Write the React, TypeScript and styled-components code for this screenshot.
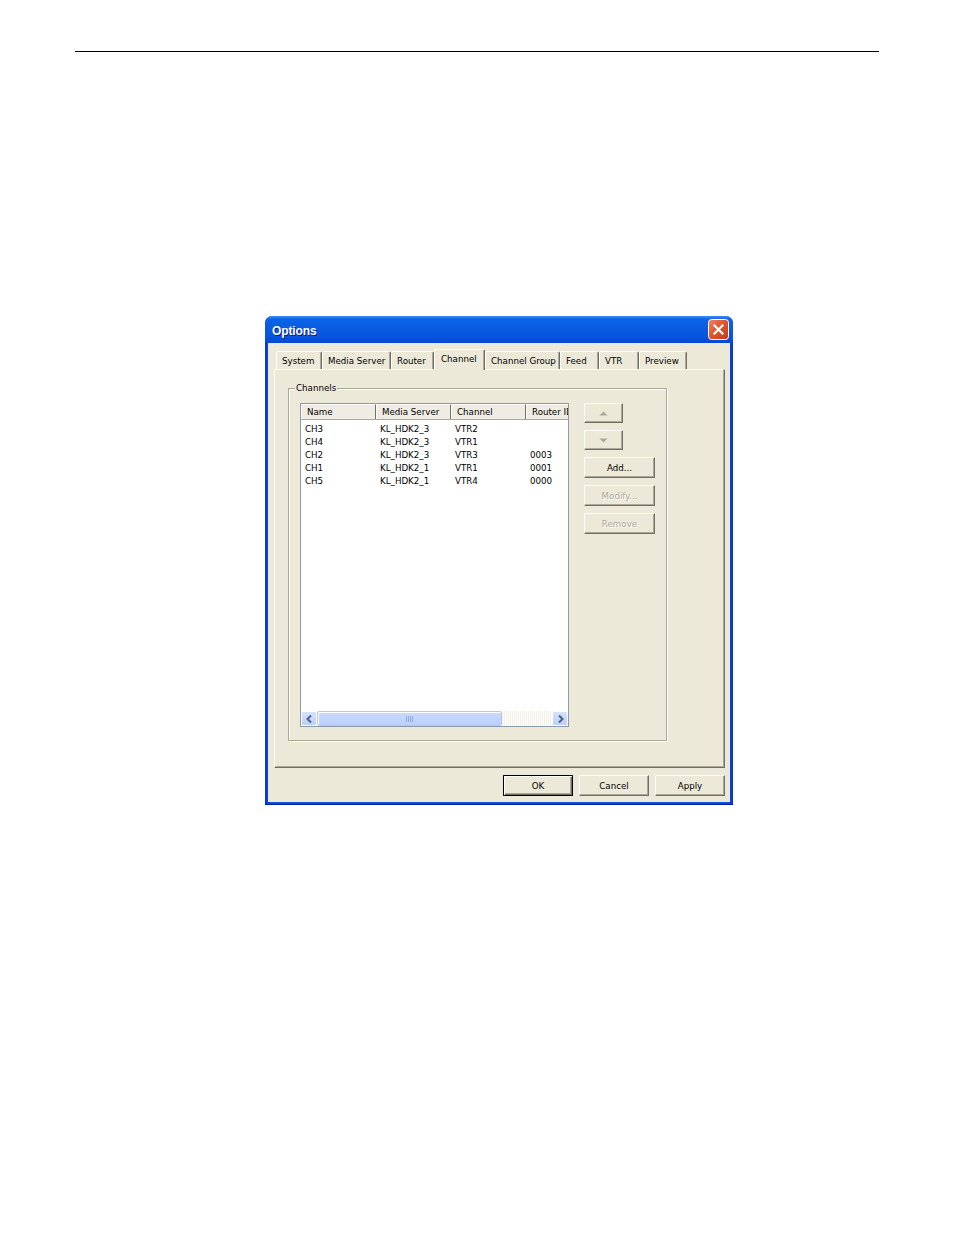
import React from "react";
import styled, { createGlobalStyle } from "styled-components";

const GlobalStyle = createGlobalStyle`
  html, body {
    margin: 0;
    padding: 0;
    background: #ffffff;
  }
  body {
    font-family: "DejaVu Sans", Tahoma, sans-serif;
  }
`;

const UI_FONT = `"DejaVu Sans", Tahoma, sans-serif`;

const Page = styled.div`
  width: 954px;
  height: 1235px;
  padding-top: 51px;
  box-sizing: border-box;
`;

const Rule = styled.div`
  margin-left: 75px;
  width: 804px;
  height: 1px;
  background: #000;
`;

const Window = styled.div`
  margin: 264px 0 0 265px;
  width: 468px;
  height: 489px;
  box-sizing: border-box;
  display: flex;
  flex-direction: column;
  padding: 0 3px 3px;
  border-radius: 7px 7px 0 0;
  background: linear-gradient(90deg, #0831d9 0%, #0a4fd8 1%, #0a4fd8 99%, #0831d9 100%);
  box-shadow: inset 0 -1px 0 #001ea0;
  overflow: hidden;
`;

const TitleBar = styled.div`
  height: 27px;
  box-sizing: border-box;
  margin: 0 -3px;
  display: flex;
  align-items: center;
  justify-content: space-between;
  padding: 2px 4px 0 7px;
  border-radius: 7px 7px 0 0;
  background: linear-gradient(
    180deg,
    #3f8cf3 0%,
    #0a64ea 12%,
    #0a5ce0 40%,
    #0655e0 75%,
    #0a48cf 100%
  );
`;

const Title = styled.span`
  font-family: "Liberation Sans", Arial, sans-serif;
  font-weight: bold;
  font-size: 12px;
  color: #fff;
  text-shadow: 1px 1px 0 #0a1c8a;
  letter-spacing: -0.1px;
`;

const Body = styled.div`
  flex: 1;
  display: flex;
  flex-direction: column;
  background: #ece9d8;
  padding: 6px 5px 6px 6px;
  box-sizing: border-box;
  font-family: ${UI_FONT};
  font-size: 8.7px;
  color: #000;
`;

const TabRow = styled.div`
  display: flex;
  align-items: flex-end;
  height: 20px;
  padding-left: 2px;
  position: relative;
  z-index: 1;
`;

const Tab = styled.div<{ $w: number; $active?: boolean }>`
  width: ${(p) => p.$w}px;
  height: ${(p) => (p.$active ? 21 : 18)}px;
  margin: ${(p) => (p.$active ? "0 0 -1px" : "0")};
  box-sizing: border-box;
  display: flex;
  align-items: center;
  padding: ${(p) => (p.$active ? "0 0 2px 6px" : "1px 0 0 5px")};
  background: #ece9d8;
  border-top: 1px solid #fff;
  border-left: 1px solid #fff;
  border-right: 1px solid #716f64;
  border-radius: 2px 2px 0 0;
  box-shadow: inset -1px 0 0 #aca899;
  white-space: nowrap;
`;

const Panel = styled.div`
  flex: 1;
  box-sizing: border-box;
  border-top: 1px solid #fff;
  border-left: 1px solid #fff;
  border-right: 1px solid #716f64;
  border-bottom: 1px solid #716f64;
  box-shadow: inset -1px -1px 0 #aca899;
  padding: 18px 0 0 13px;
`;

const GroupBox = styled.div`
  position: relative;
  width: 379px;
  height: 353px;
  box-sizing: border-box;
  border: 1px solid #aca899;
  box-shadow: inset 1px 1px 0 #fff, 1px 1px 0 #fff;
  padding: 14px 0 0 11px;
  display: flex;
  align-items: flex-start;
  gap: 15px;
`;

const GroupLabel = styled.span`
  position: absolute;
  top: -7px;
  left: 6px;
  padding: 0 1px;
  background: #ece9d8;
  line-height: 12px;
`;

const ListView = styled.div`
  width: 269px;
  height: 324px;
  box-sizing: border-box;
  border: 1px solid #8c9aab;
  background: #fff;
  display: flex;
  flex-direction: column;
  overflow: hidden;
`;

const HeaderRow = styled.div`
  display: grid;
  grid-template-columns: 75px 75px 75px 75px;
  height: 16px;
  background: #efede3;
  border-bottom: 1px solid #aca899;
  box-sizing: border-box;
`;

const HeaderCell = styled.div`
  box-sizing: border-box;
  padding-left: 5px;
  display: flex;
  align-items: center;
  white-space: nowrap;
  overflow: hidden;
  border-top: 1px solid #fff;
  border-left: 1px solid #fff;
  border-right: 1px solid #716f64;
`;

const Rows = styled.div`
  flex: 1;
  padding-top: 3px;
`;

const Row = styled.div`
  display: grid;
  grid-template-columns: 75px 75px 75px 75px;
  height: 13px;
  line-height: 13px;
`;

const Cell = styled.div`
  padding-left: 4px;
  white-space: nowrap;
`;

const HScroll = styled.div`
  height: 15px;
  display: flex;
  background: repeating-linear-gradient(90deg, #fefefb 0 1px, #f1efe6 1px 2px);
`;

const ScrollBtn = styled.div`
  width: 16px;
  height: 15px;
  box-sizing: border-box;
  border: 1px solid #fff;
  border-radius: 2px;
  background: linear-gradient(180deg, #d6e2fd 0%, #bccffa 100%);
  display: flex;
  align-items: center;
  justify-content: center;
`;

const Thumb = styled.div`
  width: 185px;
  height: 15px;
  box-sizing: border-box;
  border: 1px solid #b3c7f3;
  box-shadow: inset 1px 1px 0 #fff;
  border-radius: 2px;
  background: linear-gradient(180deg, #cbdafd 0%, #bcd0fb 100%);
  display: flex;
  align-items: center;
  justify-content: center;
`;

const Track = styled.div`
  flex: 1;
`;

const SideButtons = styled.div`
  display: flex;
  flex-direction: column;
  gap: 7px;
`;

const Btn = styled.button<{ $w: number; $h: number; $default?: boolean }>`
  width: ${(p) => p.$w}px;
  height: ${(p) => p.$h}px;
  box-sizing: border-box;
  padding: 0;
  margin: 0;
  display: flex;
  align-items: center;
  justify-content: center;
  background: #ece9d8;
  font-family: ${UI_FONT};
  font-size: 8.7px;
  color: #000;
  border: 1px solid;
  border-color: ${(p) => (p.$default ? "#000" : "#fff #716f64 #716f64 #fff")};
  box-shadow: ${(p) =>
    p.$default
      ? "inset 1px 1px 0 #fff, inset -1px -1px 0 #716f64, inset -2px -2px 0 #aca899"
      : "inset -1px -1px 0 #aca899"};
  &:disabled {
    color: #aca899;
    text-shadow: 1px 1px 0 #fff;
  }
`;

const Footer = styled.div`
  display: flex;
  justify-content: flex-end;
  gap: 6px;
  margin-top: 7px;
`;

const CloseIcon = () => (
  <svg width="21" height="21" viewBox="0 0 21 21" style={{ marginTop: -2 }}>
    <defs>
      <linearGradient id="cg" x1="0" y1="0" x2="1" y2="1">
        <stop offset="0" stopColor="#f0866a" />
        <stop offset="0.45" stopColor="#e2562f" />
        <stop offset="1" stopColor="#c23a19" />
      </linearGradient>
    </defs>
    <rect x="0.5" y="0.5" width="20" height="20" rx="3" fill="url(#cg)" stroke="#fff" />
    <path d="M6.5 6.5 L14.5 14.5 M14.5 6.5 L6.5 14.5" stroke="#fff" strokeWidth="2.2" strokeLinecap="square" />
  </svg>
);

const Chevron = ({ dir }: { dir: "left" | "right" }) => (
  <svg width="7" height="8" viewBox="0 0 7 8">
    <path
      d={dir === "left" ? "M5 0.5 L1.5 4 L5 7.5" : "M2 0.5 L5.5 4 L2 7.5"}
      stroke="#4d6185"
      strokeWidth="2"
      fill="none"
    />
  </svg>
);

const Grip = () => (
  <svg width="8" height="6" viewBox="0 0 8 6">
    {[0, 2, 4, 6].map((x) => (
      <rect key={x} x={x} y="0" width="1" height="6" fill="#8fa9e8" />
    ))}
  </svg>
);

const Triangle = ({ up }: { up?: boolean }) => (
  <svg width="9" height="5" viewBox="0 0 9 5">
    <path d={up ? "M0.5 4.5 L4.5 0.5 L8.5 4.5 Z" : "M0.5 0.5 L4.5 4.5 L8.5 0.5 Z"} fill="#aca899" />
  </svg>
);

const tabs = [
  { label: "System", w: 46 },
  { label: "Media Server", w: 69 },
  { label: "Router", w: 43 },
  { label: "Channel", w: 51, active: true },
  { label: "Channel Group", w: 75 },
  { label: "Feed", w: 39 },
  { label: "VTR", w: 40 },
  { label: "Preview", w: 48 },
];

const columns = ["Name", "Media Server", "Channel", "Router ID"];

const channels = [
  ["CH3", "KL_HDK2_3", "VTR2", ""],
  ["CH4", "KL_HDK2_3", "VTR1", ""],
  ["CH2", "KL_HDK2_3", "VTR3", "0003"],
  ["CH1", "KL_HDK2_1", "VTR1", "0001"],
  ["CH5", "KL_HDK2_1", "VTR4", "0000"],
];

export default function App() {
  return (
    <Page>
      <GlobalStyle />
      <Rule />
      <Window>
        <TitleBar>
          <Title>Options</Title>
          <CloseIcon />
        </TitleBar>
        <Body>
          <TabRow>
            {tabs.map((t) => (
              <Tab key={t.label} $w={t.w} $active={t.active}>
                {t.label}
              </Tab>
            ))}
          </TabRow>
          <Panel>
            <GroupBox>
              <GroupLabel>Channels</GroupLabel>
              <ListView>
                <HeaderRow>
                  {columns.map((c) => (
                    <HeaderCell key={c}>{c}</HeaderCell>
                  ))}
                </HeaderRow>
                <Rows>
                  {channels.map((row) => (
                    <Row key={row[0]}>
                      {row.map((v, i) => (
                        <Cell key={i}>{v}</Cell>
                      ))}
                    </Row>
                  ))}
                </Rows>
                <HScroll>
                  <ScrollBtn>
                    <Chevron dir="left" />
                  </ScrollBtn>
                  <Thumb>
                    <Grip />
                  </Thumb>
                  <Track />
                  <ScrollBtn>
                    <Chevron dir="right" />
                  </ScrollBtn>
                </HScroll>
              </ListView>
              <SideButtons>
                <Btn $w={39} $h={20} disabled>
                  <Triangle up />
                </Btn>
                <Btn $w={39} $h={20} disabled>
                  <Triangle />
                </Btn>
                <Btn $w={71} $h={21}>Add...</Btn>
                <Btn $w={71} $h={21} disabled>
                  Modify...
                </Btn>
                <Btn $w={71} $h={21} disabled>
                  Remove
                </Btn>
              </SideButtons>
            </GroupBox>
          </Panel>
          <Footer>
            <Btn $w={70} $h={21} $default>
              OK
            </Btn>
            <Btn $w={70} $h={21}>Cancel</Btn>
            <Btn $w={70} $h={21}>Apply</Btn>
          </Footer>
        </Body>
      </Window>
    </Page>
  );
}
